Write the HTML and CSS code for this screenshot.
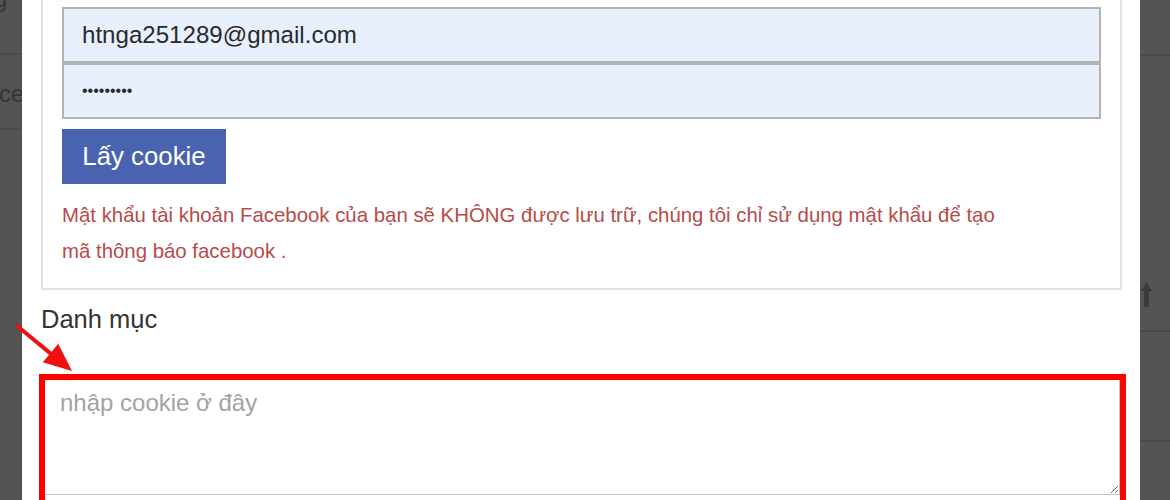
FILE: index.html
```html
<!DOCTYPE html>
<html lang="vi">
<head>
<meta charset="utf-8">
<title>Lấy cookie</title>
<link rel="stylesheet" href="styles.css">
</head>
<body>
<div class="page">
  <div class="bg-left">
    <div class="bg-row row-a"><span class="cut-g">g</span></div>
    <div class="bg-row row-b"><span class="cut-ce">ce</span></div>
    <div class="bg-row row-c"></div>
  </div>

  <div class="modal">
    <div class="panel">
      <input class="field" type="text" value="htnga251289@gmail.com">
      <input class="field" type="password" value="123456789">
      <button class="btn" type="button">Lấy cookie</button>
      <p class="warn">Mật khẩu tài khoản Facebook của bạn sẽ KHÔNG được lưu trữ, chúng tôi chỉ sử dụng mật khẩu để tạo mã thông báo facebook .</p>
    </div>
    <div class="label">Danh mục</div>
    <div class="highlight">
      <textarea class="cookie" placeholder="nhập cookie ở đây"></textarea>
    </div>
  </div>

  <div class="bg-right">
    <div class="bg-row rrow-a"></div>
    <div class="bg-row rrow-b"></div>
    <div class="bg-row rrow-c"></div>
    <div class="bg-row rrow-d"></div>
    <svg class="up-icon" width="12" height="26" viewBox="0 0 12 26">
      <path d="M5.5 0 L11 9 L8 9 L8 25 L3 25 L3 9 L0 9 Z" fill="#3a3a3a"/>
    </svg>
  </div>

  <svg class="arrow" width="90" height="60" viewBox="0 0 90 60">
    <line x1="16" y1="5" x2="56" y2="38" stroke="#f01010" stroke-width="4"/>
    <polygon points="72,51 42.8,42.2 58.2,23.8" fill="#f01010"/>
  </svg>
</div>
</body>
</html>
```
FILE: styles.css
```css
html, body {
  margin: 0;
  padding: 0;
  height: 100%;
  overflow: hidden;
}
body {
  background: #545454;
  font-family: "Liberation Sans", Arial, sans-serif;
}
.page {
  position: relative;
  display: flex;
  height: 500px;
  width: 1170px;
}
.bg-left {
  width: 22px;
  flex: none;
  overflow: hidden;
  display: flex;
  flex-direction: column;
  color: #37332f;
  font-size: 24px;
}
.bg-right {
  position: relative;
  width: 30px;
  flex: none;
  overflow: hidden;
  display: flex;
  flex-direction: column;
}
.bg-row {
  border-bottom: 2px solid #4a4a4a;
  box-sizing: border-box;
  flex: none;
}
.row-a { height: 55px; }
.row-b { height: 75px; display: flex; align-items: center; }
.row-c { flex: 1; border-bottom: none; }
.cut-g {
  display: block;
  margin-left: -6px;
  margin-top: -15px;
  line-height: 28px;
}
.cut-ce {
  display: block;
  margin-left: -1px;
  line-height: 28px;
  margin-top: 4px;
}
.rrow-a { height: 56px; }
.rrow-b { height: 276px; }
.rrow-c { height: 110px; }
.rrow-d { flex: 1; border-bottom: none; }
.up-icon {
  position: absolute;
  left: 1px;
  top: 282px;
}

.modal {
  width: 1118px;
  flex: none;
  background: #fff;
  padding-left: 19px;
  box-sizing: border-box;
}
.panel {
  width: 1081px;
  box-sizing: border-box;
  border: 2px solid #e2e2e2;
  border-top: none;
  padding: 7px 19px 19px 19px;
}
.field {
  display: block;
  box-sizing: border-box;
  width: 1039px;
  height: 56px;
  margin: 0;
  border: 2px solid #b3b3b3;
  background: #e8f0fe;
  padding: 0 18px;
  font-family: "Liberation Sans", Arial, sans-serif;
  font-size: 24.1px;
  color: #2a2a2a;
  outline: none;
}
.field[type="password"] {
  font-size: 16px;
}
.btn {
  display: block;
  margin-top: 10px;
  width: 164px;
  height: 55px;
  border: none;
  background: #4a63b0;
  color: #fff;
  font-family: "Liberation Sans", Arial, sans-serif;
  font-size: 25.8px;
  padding: 0;
}
.warn {
  width: 955px;
  margin: 13px 0 0 0;
  color: #b94a48;
  font-size: 20.4px;
  line-height: 36px;
}
.label {
  margin-top: 14px;
  color: #333;
  font-size: 25.5px;
  line-height: 30px;
}
.highlight {
  margin-top: 40px;
  margin-left: -2px;
  width: 1087px;
  height: 160px;
  box-sizing: border-box;
  border: 6px solid #ff0000;
  border-bottom: none;
}
.cookie {
  display: block;
  box-sizing: border-box;
  width: 1075px;
  height: 115px;
  margin: 0;
  border: 1px solid #c4c4c4;
  border-left: none;
  border-top: none;
  padding: 7px 15px;
  font-family: "Liberation Sans", Arial, sans-serif;
  font-size: 24px;
  line-height: 1.3;
  color: #333;
  outline: none;
}
.cookie::placeholder { color: #a3a3a3; }

.arrow {
  position: absolute;
  left: 0;
  top: 320px;
}
```
